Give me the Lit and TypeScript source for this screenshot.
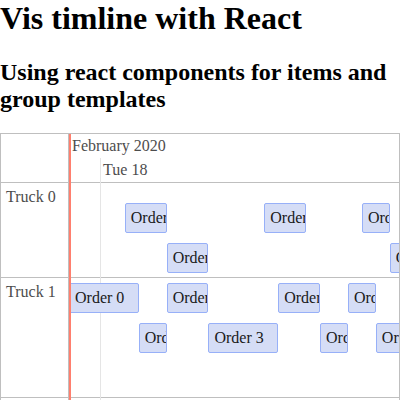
import { LitElement, html, css } from "lit";
import { customElement, property } from "lit/decorators.js";
import { styleMap } from "lit/directives/style-map.js";

interface Order {
  name: string;
  start: number;
  hours: number;
}

interface Truck {
  name: string;
  roomy: boolean;
  lanes: Order[][];
}

const HOURS_IN_VIEW = 23.66;
const MIDNIGHT = 2.23;

const percent = (hours: number) => `${(hours / HOURS_IN_VIEW) * 100}%`;

const trucks: Truck[] = [
  {
    name: "Truck 0",
    roomy: true,
    lanes: [
      [
        { name: "Order 1", start: 4, hours: 3 },
        { name: "Order 3", start: 14, hours: 3 },
        { name: "Order 4", start: 21, hours: 2 },
      ],
      [
        { name: "Order 2", start: 7, hours: 3 },
        { name: "Order 5", start: 23, hours: 3 },
      ],
    ],
  },
  {
    name: "Truck 1",
    roomy: false,
    lanes: [
      [
        { name: "Order 0", start: 0, hours: 5 },
        { name: "Order 2", start: 7, hours: 3 },
        { name: "Order 4", start: 15, hours: 3 },
        { name: "Order 6", start: 20, hours: 2 },
      ],
      [
        { name: "Order 1", start: 5, hours: 2 },
        { name: "Order 3", start: 10, hours: 5 },
        { name: "Order 5", start: 18, hours: 2 },
        { name: "Order 7", start: 22, hours: 3 },
      ],
      [],
    ],
  },
];

@customElement("order-item")
export class OrderItem extends LitElement {
  @property() name = "";

  static styles = css`
    :host {
      display: block;
      box-sizing: border-box;
      height: 30px;
      padding: 5px 0 5px 5px;
      border: 1px solid #97b0f8;
      border-radius: 2px;
      background: #d5ddf6;
      color: #1a1a1a;
      line-height: 18px;
      white-space: nowrap;
      overflow: hidden;
    }
  `;

  render() {
    return html`${this.name}`;
  }
}

@customElement("app-root")
export class AppRoot extends LitElement {
  static styles = css`
    :host {
      display: flex;
      flex-direction: column;
      min-height: 100vh;
      font-family: "Liberation Serif", "Times New Roman", serif;
      font-size: 16px;
      color: #000;
      background: #fff;
    }
    h1 {
      margin: 0 0 22px;
      font-size: 32px;
      line-height: 37px;
    }
    h2 {
      margin: 0 0 20px;
      font-size: 24px;
      line-height: 27px;
    }
    .timeline {
      position: relative;
      flex: 1;
      display: flex;
      flex-direction: column;
      overflow: hidden;
      border: 1px solid #bfbfbf;
      border-bottom: 0;
      color: #4d4d4d;
      line-height: 18px;
    }
    .row {
      display: grid;
      grid-template-columns: 68px 1fr;
      border-bottom: 1px solid #bfbfbf;
    }
    .rest {
      flex: 1;
      border-bottom: 0;
    }
    .label {
      padding: 5px;
      box-sizing: border-box;
      border-right: 1px solid #bfbfbf;
    }
    .major,
    .minor {
      height: 18px;
      padding: 3px;
      white-space: nowrap;
    }
    .minor {
      position: relative;
    }
    .day {
      position: absolute;
      padding-left: 3px;
    }
    .lanes {
      position: relative;
      display: flex;
      flex-direction: column;
      gap: 10px;
      padding: 5px 0 4px;
    }
    .lanes.roomy {
      padding-top: 20px;
    }
    .lane {
      position: relative;
      height: 30px;
    }
    order-item {
      position: absolute;
      top: 0;
    }
    .overlay {
      position: absolute;
      top: 0;
      bottom: 0;
      left: 68px;
      right: 0;
      pointer-events: none;
    }
    .midnight {
      position: absolute;
      top: 24px;
      bottom: 0;
      width: 1px;
      background: #e5e5e5;
    }
    .now {
      position: absolute;
      top: 0;
      bottom: 0;
      left: 0;
      width: 2px;
      background: #ff7f6e;
    }
  `;

  private renderOrder(order: Order) {
    return html`<order-item
      .name=${order.name}
      style=${styleMap({
        left: percent(order.start),
        width: percent(order.hours),
      })}
    ></order-item>`;
  }

  private renderTruck(truck: Truck) {
    return html`<div class="row">
      <div class="label">${truck.name}</div>
      <div class="lanes ${truck.roomy ? "roomy" : ""}">
        ${truck.lanes.map(
          (lane) => html`<div class="lane">${lane.map((o) => this.renderOrder(o))}</div>`
        )}
      </div>
    </div>`;
  }

  render() {
    return html`
      <h1>Vis timline with React</h1>
      <h2>Using react components for items and group templates</h2>
      <div class="timeline">
        <div class="overlay">
          <div class="midnight" style=${styleMap({ left: percent(MIDNIGHT) })}></div>
        </div>
        <div class="row">
          <div class="label"></div>
          <div>
            <div class="major">February 2020</div>
            <div class="minor">
              <span class="day" style=${styleMap({ left: percent(MIDNIGHT) })}>Tue 18</span>
            </div>
          </div>
        </div>
        ${trucks.map((t) => this.renderTruck(t))}
        <div class="row rest"><div class="label"></div></div>
        <div class="overlay"><div class="now"></div></div>
      </div>
    `;
  }
}
